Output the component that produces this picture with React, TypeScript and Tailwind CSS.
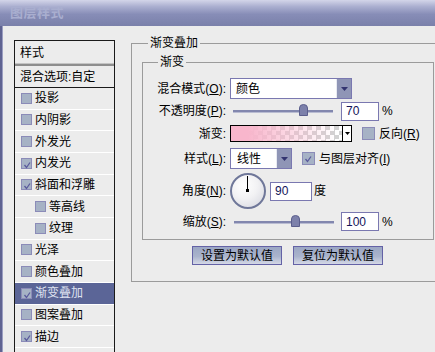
import React from 'react';

type Item = { label: string; checked?: boolean; indent?: boolean; selected?: boolean };

const items: Item[] = [
  { label: '投影' },
  { label: '内阴影' },
  { label: '外发光' },
  { label: '内发光', checked: true },
  { label: '斜面和浮雕', checked: true },
  { label: '等高线', indent: true },
  { label: '纹理', indent: true },
  { label: '光泽' },
  { label: '颜色叠加' },
  { label: '渐变叠加', checked: true, selected: true },
  { label: '图案叠加' },
  { label: '描边', checked: true },
];

const Tick = () => (
  <svg className="absolute left-[1px] top-[1px]" width="9" height="9" viewBox="0 0 9 9">
    <path d="M1.5 5 L3.5 7.5 L7 2.5" stroke="#5a5a9c" strokeWidth="1.3" fill="none" />
  </svg>
);

const SmallBox = ({ checked }: { checked?: boolean }) => (
  <span className="relative inline-block w-[11px] h-[11px] shrink-0 border border-[#8b8bb8] bg-[#a6b2c5]">
    {checked && <Tick />}
  </span>
);

const BigBox = ({ checked }: { checked?: boolean }) => (
  <span className="relative inline-block w-[13px] h-[13px] shrink-0 border border-[#8b8bb8] bg-[#a6b2c5]">
    {checked && <Tick />}
  </span>
);

const Label = ({ text, k }: { text: string; k: string }) => (
  <span className="w-[83px] shrink-0 text-right">
    {text}(<span className="underline underline-offset-1">{k}</span>):
  </span>
);

const Arrow = () => (
  <svg width="7" height="4" viewBox="0 0 7 4">
    <path d="M0 0 L7 0 L3.5 4 Z" fill="#33336f" />
  </svg>
);

const DropButton = () => (
  <span className="w-[15px] h-full flex items-center justify-center border-l border-[#e8eaf2] bg-[#8f95b6]">
    <Arrow />
  </span>
);

const Slider = ({ pos }: { pos: number }) => (
  <div className="relative w-[100px] h-[14px]">
    <div className="absolute left-0 right-0 top-[6px] h-[3px] bg-[#8287ae] border-b border-[#b9bcd2]" />
    <svg className="absolute top-0" style={{ left: pos }} width="9" height="12" viewBox="0 0 9 12">
      <path d="M0.5 4 Q0.5 0.5 4.5 0.5 Q8.5 0.5 8.5 4 L8.5 11.5 L0.5 11.5 Z" fill="#7d81ab" stroke="#5c5f8d" />
    </svg>
  </div>
);

const Input = ({ value, w }: { value: string; w: 'a' | 'b' }) => (
  <span
    className={`${w === 'a' ? 'w-[38px]' : 'w-[42px]'} h-[19px] flex items-center pl-[4px] bg-white border border-[#7a78b0] text-[#14145a]`}
  >
    {value}
  </span>
);

export default function App() {
  return (
    <div className="w-[435px] h-[352px] overflow-hidden bg-[#ececec] text-[12px] leading-[14px] text-black font-['Liberation_Sans','Noto_Sans_CJK_SC',sans-serif]">
      <div className="h-[26px] flex items-center pl-[10px] bg-[linear-gradient(to_bottom,#d3d5e9_0%,#abafd0_25%,#878db7_55%,#7a80aa_100%)]">
        <span className="text-[13px] font-bold text-[#a9aecf] tracking-[0.5px]">图层样式</span>
      </div>

      <div className="flex h-[326px]">
        <div className="w-[3px] shrink-0 border-l-2 border-[#5f6391] bg-[#9a9dc1]" />

        <div className="pl-[11px] pt-[14px] shrink-0">
          <div className="w-[101px] h-[320px] border border-[#1a1a1a] border-b-0 bg-[#ececec]">
            <div className="h-[22px] flex items-center pl-[5px] pt-[2px]">样式</div>
            <div className="h-[3px] bg-[#8e8e8e] border-t border-[#c4c4c4]" />
            <div className="h-[22px] flex items-center pl-[5px] border-b border-[#1a1a1a]">混合选项:自定</div>
            {items.map((it) => (
              <div
                key={it.label}
                className={`h-[21.67px] flex items-center gap-[3px] border-b border-white ${it.indent ? 'pl-[20px]' : 'pl-[6px]'} ${it.selected ? 'bg-[#5b6597] text-[#dfe2f0]' : ''}`}
              >
                <SmallBox checked={it.checked} />
                <span>{it.label}</span>
              </div>
            ))}
          </div>
        </div>

        <div className="ml-[16px] pt-[17px]">
          <div className="relative w-[320px] h-[239px] border-l border-t border-b border-[#9b9b9b]">
            <span className="absolute left-[16px] top-[-8px] px-[2px] bg-[#ececec]">渐变叠加</span>

            <div className="relative ml-[10px] mt-[18px] w-[292px] h-[178px] border border-[#9b9b9b] pt-[15px]">
              <span className="absolute left-[15px] top-[-8px] px-[2px] bg-[#ececec]">渐变</span>

              <div className="flex items-center h-[21px] gap-[4px]">
                <Label text="混合模式" k="O" />
                <span className="w-[122px] h-[21px] flex items-center justify-between bg-white border border-[#7a78b0]">
                  <span className="pl-[5px]">颜色</span>
                  <DropButton />
                </span>
              </div>

              <div className="flex items-center h-[22px] mt-[1px] gap-[4px]">
                <Label text="不透明度" k="P" />
                <span className="ml-[3px]">
                  <Slider pos={66} />
                </span>
                <span className="ml-[4px]">
                  <Input value="70" w="a" />
                </span>
                <span className="ml-[-1px]">%</span>
              </div>

              <div className="flex items-center h-[21px] mt-[1px] gap-[4px]">
                <span className="w-[83px] shrink-0 text-right">渐变:</span>
                <span className="w-[122px] h-[17px] flex border border-black">
                  <span className="flex-1 bg-[linear-gradient(to_right,#f8b6cc_0%,#f8b6cc_15%,rgba(248,182,204,0)_95%),repeating-conic-gradient(#d2d2d2_0_25%,#ffffff_0_50%)] bg-[length:100%_100%,9px_9px]" />
                  <span className="w-[9px] flex items-center justify-center border-l border-black bg-white">
                    <svg width="5" height="3" viewBox="0 0 5 3">
                      <path d="M0 0 L5 0 L2.5 3 Z" fill="#000" />
                    </svg>
                  </span>
                </span>
                <span className="ml-[6px] flex items-center gap-[4px]">
                  <BigBox />
                  <span>
                    反向(<span className="underline underline-offset-1">R</span>)
                  </span>
                </span>
              </div>

              <div className="flex items-center h-[21px] mt-[4px] gap-[4px]">
                <Label text="样式" k="L" />
                <span className="w-[62px] h-[21px] flex items-center justify-between bg-white border border-[#7a78b0]">
                  <span className="pl-[6px]">线性</span>
                  <DropButton />
                </span>
                <span className="ml-[6px] flex items-center gap-[4px]">
                  <BigBox checked />
                  <span>
                    与图层对齐(<span className="underline underline-offset-1">I</span>)
                  </span>
                </span>
              </div>

              <div className="flex items-center h-[36px] mt-[4px] gap-[4px]">
                <Label text="角度" k="N" />
                <div className="relative w-[36px] h-[36px] shrink-0 rounded-full border-2 border-[#6f7799] bg-[radial-gradient(circle_at_38%_32%,#ffffff_0%,#f2f2f4_45%,#d3d4dd_100%)]">
                  <div className="absolute left-[15px] top-[1px] w-[1px] h-[15px] bg-black" />
                  <div className="absolute left-[14px] top-[14px] w-[3px] h-[3px] bg-black" />
                </div>
                <Input value="90" w="b" />
                <span className="ml-[-2px]">度</span>
              </div>

              <div className="flex items-center h-[21px] mt-[2px] gap-[4px]">
                <Label text="缩放" k="S" />
                <span className="ml-[4px]">
                  <Slider pos={57} />
                </span>
                <span className="ml-[3px]">
                  <Input value="100" w="a" />
                </span>
                <span className="ml-[-1px]">%</span>
              </div>
            </div>

            <div className="flex gap-[11px] ml-[60px] mt-[6px]">
              {['设置为默认值', '复位为默认值'].map((t) => (
                <button
                  key={t}
                  className="w-[90px] h-[19px] flex items-center justify-center border border-[#6462a6] bg-[linear-gradient(to_bottom,#9ba7c4_0%,#a9b3cc_55%,#d4d8e6_100%)] text-black"
                >
                  {t}
                </button>
              ))}
            </div>
          </div>
        </div>
      </div>
    </div>
  );
}
